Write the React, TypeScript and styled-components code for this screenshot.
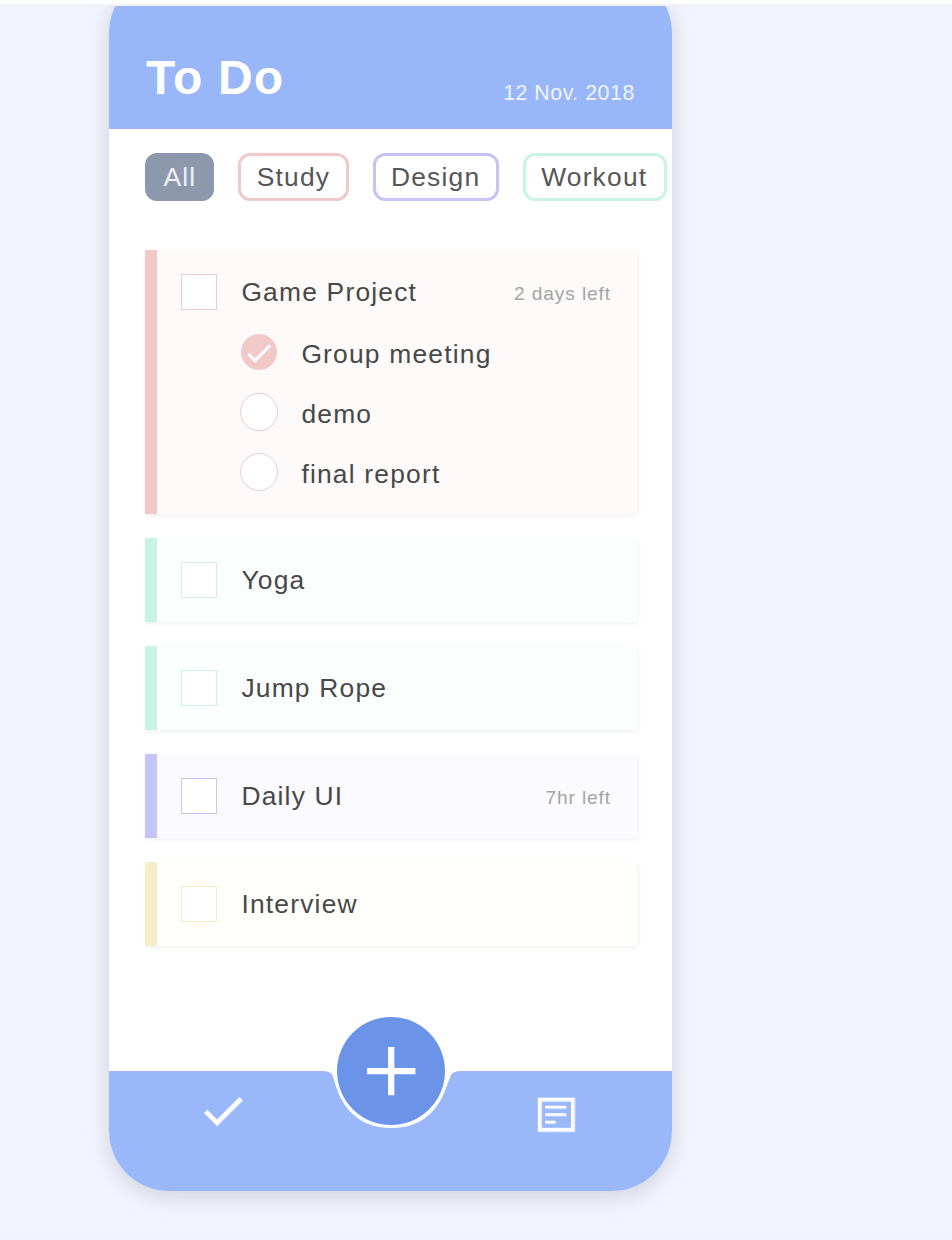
import React from "react";
import styled, { createGlobalStyle } from "styled-components";

const GlobalStyle = createGlobalStyle`
  * { box-sizing: border-box; }
  body {
    margin: 0;
    background: #f2f5fe;
    font-family: "Liberation Sans", Arial, sans-serif;
    color: #484848;
  }
`;

const tones = {
  pink: { main: "#f2c9c9", tint: "#fefaf9" },
  mint: { main: "#c9f4e5", tint: "#fbfffe" },
  violet: { main: "#c4c4f5", tint: "#fafaff" },
  yellow: { main: "#f3eec5", tint: "#fffffb" },
};
type Tone = keyof typeof tones;

const Page = styled.div`
  display: flex;
  flex-direction: column;
  height: 1240px;
  overflow: hidden;
`;

const TopStrip = styled.div`
  flex: none;
  height: 6px;
  background: #fff;
  border-bottom: 2px solid #f1f2f4;
`;

const Stage = styled.main`
  flex: 1;
  min-height: 0;
  overflow: hidden;
  padding-left: 109.4px;
`;

const BottomStrip = styled.div`
  flex: none;
  height: 13px;
  background: #f1f4fd;
`;

const Phone = styled.div`
  display: flex;
  flex-direction: column;
  width: 563px;
  height: 1218px;
  margin-top: -33px;
  border-radius: 60px;
  background: #fff;
  box-shadow: 0 5px 24px rgba(0, 0, 0, 0.15);
`;

const Header = styled.header`
  display: flex;
  justify-content: space-between;
  align-items: flex-end;
  flex: none;
  height: 156px;
  padding: 0 37.6px 24px 36.6px;
  border-radius: 60px 60px 0 0;
  background: #98b6f8;
  color: #fff;
`;

const Title = styled.h1`
  margin: 0;
  font-size: 48px;
  line-height: 54px;
  letter-spacing: 1.2px;
`;

const DateText = styled.span`
  font-size: 21.4px;
  line-height: 24px;
  letter-spacing: 0.5px;
  opacity: 0.85;
`;

const Tags = styled.nav`
  display: flex;
  flex: none;
  gap: 24px;
  padding: 24px 0 0 36px;
`;

const Tag = styled.button<{ $color: string; $active?: boolean }>`
  flex: none;
  height: 48px;
  padding: 0 15.4px;
  border: 3px solid ${(p) => p.$color};
  border-radius: 12px;
  background: ${(p) => (p.$active ? p.$color : "#fff")};
  color: ${(p) => (p.$active ? "#eef0f4" : "#565656")};
  font: 26.4px/42px "Liberation Sans", Arial, sans-serif;
  letter-spacing: 1.2px;
  &:first-child {
    padding: 0 15px;
  }
  &:last-child {
    padding-right: 16.4px;
  }
`;

const List = styled.section`
  display: flex;
  flex: 1;
  flex-direction: column;
  gap: 24px;
  padding: 49.4px 35px 0 36px;
`;

const Card = styled.article<{ $tone: Tone }>`
  padding: 24px 26.5px 24px 24px;
  border-left: 12px solid ${(p) => tones[p.$tone].main};
  background: ${(p) => tones[p.$tone].tint};
  box-shadow: 1px 2px 5px rgba(0, 0, 0, 0.06);
`;

const Row = styled.div`
  display: flex;
  align-items: center;
  height: 36px;
`;

const Checkbox = styled.span<{ $tone: Tone }>`
  width: 36px;
  height: 36px;
  margin-right: 24px;
  border: 1px solid ${(p) => tones[p.$tone].main};
  background: #fff;
`;

const Name = styled.span`
  flex: 1;
  font-size: 26.4px;
  line-height: 36px;
  letter-spacing: 1.2px;
`;

const Due = styled.span`
  padding-top: 3px;
  color: #a5a4a4;
  font-size: 19.2px;
  letter-spacing: 0.85px;
`;

const SubTasks = styled.div`
  display: flex;
  flex-direction: column;
  gap: 24px;
  padding: 24px 0 0 59px;
`;

const Round = styled.span<{ $tone: Tone; $done?: boolean }>`
  display: flex;
  align-items: center;
  justify-content: center;
  width: ${(p) => (p.$done ? 36 : 38)}px;
  height: ${(p) => (p.$done ? 36 : 38)}px;
  margin: 0 ${(p) => (p.$done ? 24 : 23)}px 0 ${(p) => (p.$done ? 1 : 0)}px;
  border: ${(p) => (p.$done ? 0 : 1)}px solid ${(p) => tones[p.$tone].main};
  border-radius: 50%;
  background: ${(p) => (p.$done ? tones[p.$tone].main : "#fff")};
`;

const SubName = styled(Name)`
  padding-top: 3px;
`;

const Footer = styled.footer`
  position: relative;
  display: flex;
  flex: none;
  height: 120px;
  justify-content: space-between;
  padding: 24px 96px 0 91.6px;
`;

const FooterShape = styled.svg`
  position: absolute;
  inset: 0;
`;

const NavButton = styled.button`
  position: relative;
  width: 42px;
  height: 40px;
  padding: 0;
  border: 0;
  background: none;
`;

const AddButton = styled.button`
  position: absolute;
  top: -54px;
  left: 228px;
  width: 108px;
  height: 108px;
  padding: 0;
  border: 0;
  border-radius: 50%;
  background: #6b94e9;
`;

type Task = {
  name: string;
  tone: Tone;
  due?: string;
  subs?: { name: string; done?: boolean }[];
};

const tasks: Task[] = [
  {
    name: "Game Project",
    tone: "pink",
    due: "2 days left",
    subs: [{ name: "Group meeting", done: true }, { name: "demo" }, { name: "final report" }],
  },
  { name: "Yoga", tone: "mint" },
  { name: "Jump Rope", tone: "mint" },
  { name: "Daily UI", tone: "violet", due: "7hr left" },
  { name: "Interview", tone: "yellow" },
];

const tags = [
  { label: "All", color: "#8d98ad", active: true },
  { label: "Study", color: tones.pink.main },
  { label: "Design", color: tones.violet.main },
  { label: "Workout", color: tones.mint.main },
];

function TaskCard({ task }: { task: Task }) {
  return (
    <Card $tone={task.tone}>
      <Row>
        <Checkbox $tone={task.tone} />
        <Name>{task.name}</Name>
        {task.due && <Due>{task.due}</Due>}
      </Row>
      {task.subs && (
        <SubTasks>
          {task.subs.map((sub) => (
            <Row key={sub.name}>
              <Round $tone={task.tone} $done={sub.done}>
                {sub.done && (
                  <svg width="36" height="36" viewBox="0 0 36 36" fill="none" stroke="#fff" strokeWidth="3">
                    <path d="M7.200 20 14.200 26.400 29.200 11.400" />
                  </svg>
                )}
              </Round>
              <SubName>{sub.name}</SubName>
            </Row>
          ))}
        </SubTasks>
      )}
    </Card>
  );
}

export default function App() {
  return (
    <Page>
      <GlobalStyle />
      <TopStrip />
      <Stage>
        <Phone>
          <Header>
            <Title>To Do</Title>
            <DateText>12 Nov. 2018</DateText>
          </Header>
          <Tags>
            {tags.map((t) => (
              <Tag key={t.label} $color={t.color} $active={t.active}>
                {t.label}
              </Tag>
            ))}
          </Tags>
          <List>
            {tasks.map((t) => (
              <TaskCard key={t.name} task={t} />
            ))}
          </List>
          <Footer>
            <FooterShape width="563" height="120" viewBox="0 0 563 120">
              <path
                fill="#9ab8f9"
                d="M0 0H212C219 0 222.500 1.500 223.800 5C228 18 230 28 240.500 40C251 51.500 265 57 282.300 57C299.500 57 313.500 51.500 324 40C334.500 28 336.500 18 341.500 5C343 1.500 346 0 353 0H563V60A60 60 0 0 1 503 120H60A60 60 0 0 1 0 60Z"
              />
            </FooterShape>
            <NavButton aria-label="Tasks">
              <svg width="42" height="40" viewBox="0 0 42 40" fill="none">
                <path d="M5.200 17.100 16.500 28.500 40.500 4.500" stroke="#fff" strokeOpacity=".35" strokeWidth="4.500" />
                <path d="M4.700 16.300 16 27.600 40 3.600" stroke="#fff" strokeWidth="4.500" />
              </svg>
            </NavButton>
            <NavButton aria-label="Notes">
              <svg width="42" height="40" viewBox="0 0 42 40" fill="none" stroke="#fff">
                <path d="M6 4.700H39.200V35.100H6Z" strokeWidth="5" strokeOpacity=".35" />
                <path d="M5.700 4.600H38.700V34.800H5.700Z" strokeWidth="3.400" />
                <path d="M12 12.800H33M12 20.300H33M12 27.800H22.500" strokeWidth="3" strokeOpacity=".4" />
                <path d="M11.200 12H31.800M11.200 19.500H31.800M11.200 27H21.200" strokeWidth="2.600" />
              </svg>
            </NavButton>
            <AddButton aria-label="Add task">
              <svg width="108" height="108" viewBox="0 0 108 108" stroke="#fff" strokeWidth="6.300">
                <path d="M30 54.200H78.400M54.200 30V78.200" />
              </svg>
            </AddButton>
          </Footer>
        </Phone>
      </Stage>
      <BottomStrip />
    </Page>
  );
}
